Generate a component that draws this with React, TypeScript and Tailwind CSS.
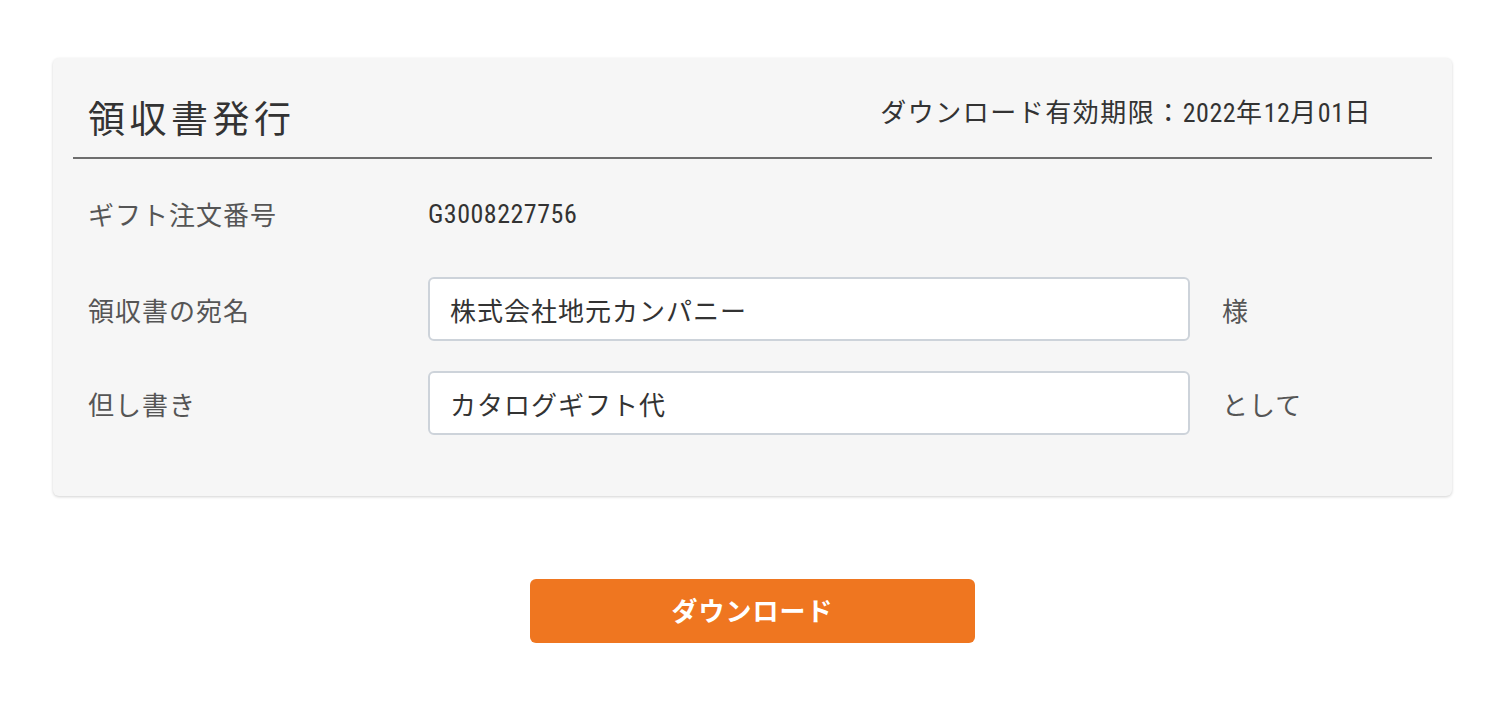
import React from "react";

const jp = { fontFamily: '"Noto Sans CJK JP", "Noto Sans", sans-serif' };

function Digits({ children }: { children: React.ReactNode }) {
  return <span className="font-[Roboto] font-stretch-condensed [font-stretch:condensed] tracking-[0.5px]">{children}</span>;
}

export default function App() {
  return (
    <div className="w-[1500px] h-[706px] bg-white overflow-hidden" style={jp}>
      <div className="pt-[58px] ml-[53px] w-[1399px]">
        <div className="bg-[#f6f6f6] rounded-[6px] shadow-[0_1px_3px_rgba(0,0,0,0.18)] px-[20px] pb-[61px]">
          <div className="flex items-start justify-between pl-[15px] pr-[60px] pt-[39px] pb-[20px] border-b-2 border-[#6e6e6e]">
            <h1 className="text-[37px] leading-[40px] tracking-[4.5px] text-[#333] font-normal">領収書発行</h1>
            <div className="text-[26px] leading-[30px] tracking-[1.5px] text-[#333] mt-[-1px]">
              ダウンロード有効期限：<Digits>2022</Digits>年<Digits>12</Digits>月<Digits>01</Digits>日
            </div>
          </div>
          <div className="px-[15px] pt-[22px] flex flex-col gap-[30px]">
            <div className="flex items-center h-[64px]">
              <div className="w-[340px] text-[26px] tracking-[1px] text-[#555]">ギフト注文番号</div>
              <div className="text-[26px] text-[#333]"><Digits>G3008227756</Digits></div>
            </div>
            <div className="flex items-center h-[64px] mt-[2px]">
              <div className="w-[340px] text-[26px] tracking-[1px] text-[#555]">領収書の宛名</div>
              <div className="w-[762px] h-[64px] bg-white border-2 border-[#cdd3da] rounded-[6px] flex items-center px-[20px] text-[26px] tracking-[1px] text-[#333]">
                株式会社地元カンパニー
              </div>
              <div className="ml-[32px] text-[26px] tracking-[1px] text-[#555]">様</div>
            </div>
            <div className="flex items-center h-[64px]">
              <div className="w-[340px] text-[26px] tracking-[1px] text-[#555]">但し書き</div>
              <div className="w-[762px] h-[64px] bg-white border-2 border-[#cdd3da] rounded-[6px] flex items-center px-[20px] text-[26px] tracking-[1px] text-[#333]">
                カタログギフト代
              </div>
              <div className="ml-[32px] text-[26px] tracking-[1px] text-[#555]">として</div>
            </div>
          </div>
        </div>
        <div className="flex justify-center mt-[83px]">
          <button className="w-[445px] h-[64px] bg-[#ef7620] rounded-[6px] text-white text-[26px] font-bold tracking-[1px] pb-[4px]">
            ダウンロード
          </button>
        </div>
      </div>
    </div>
  );
}
